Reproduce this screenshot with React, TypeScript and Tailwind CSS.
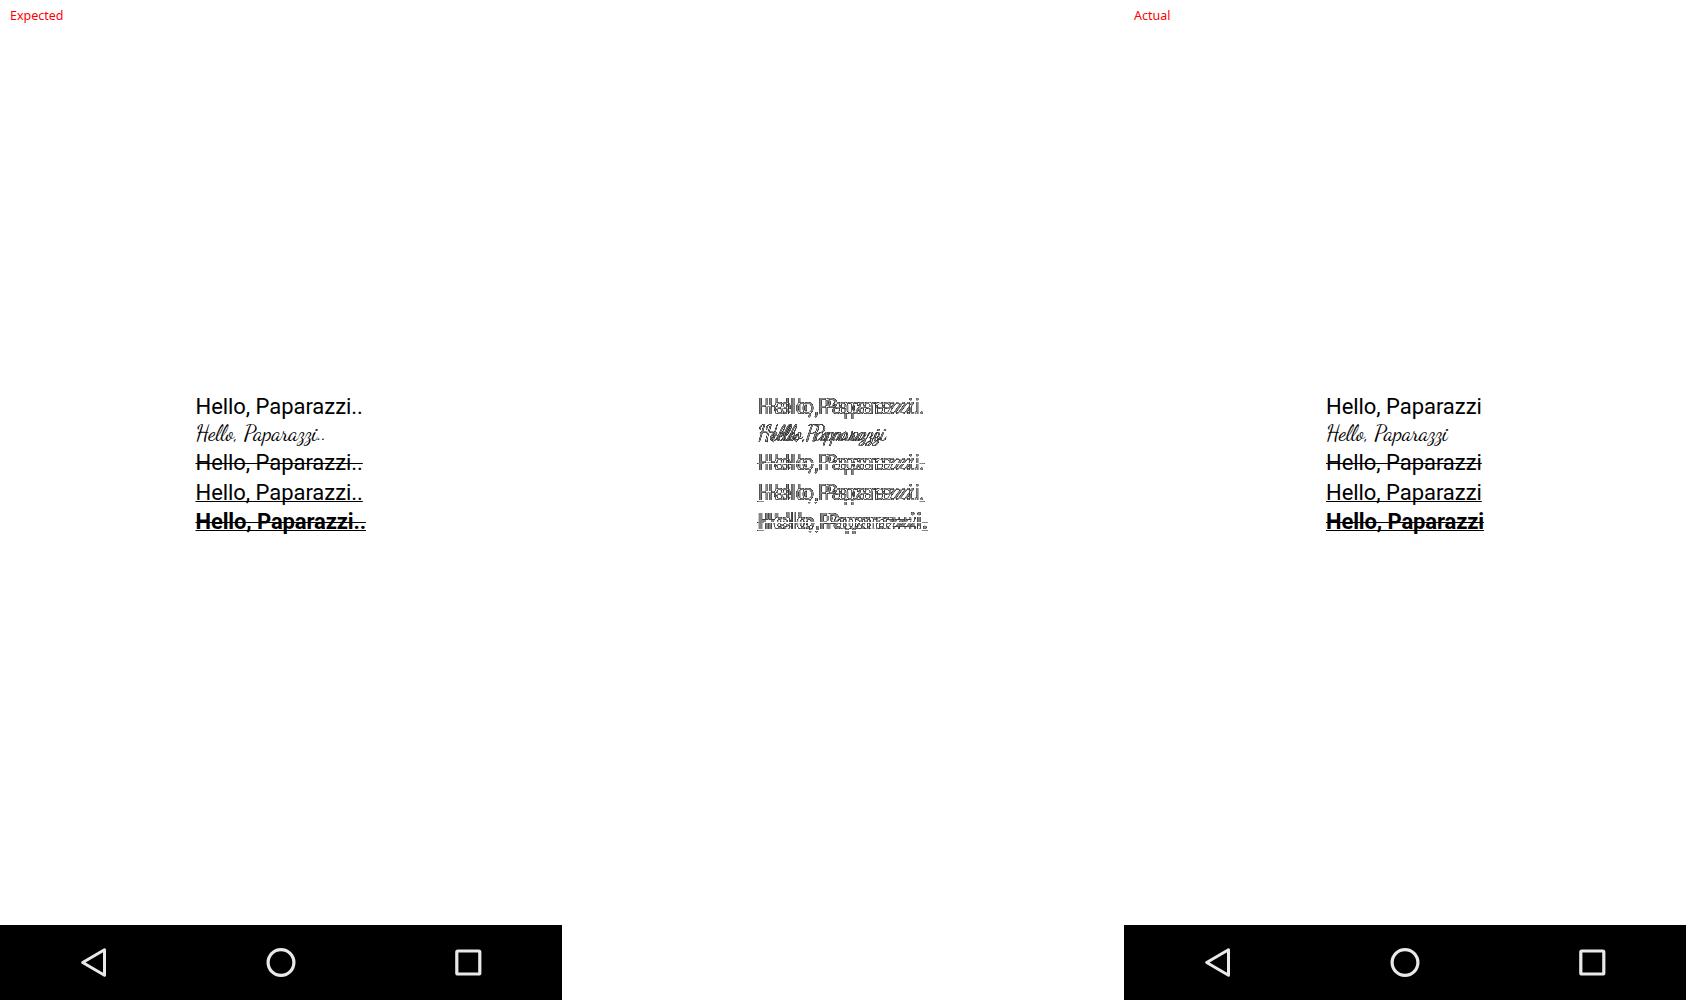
import clsx from "clsx";

const lines = [
  { key: "plain", row: "h-[29px]", style: "tracking-[-0.05px]" },
  { key: "script", row: "h-[27px] pb-[2px]", style: "script" },
  { key: "strike", row: "h-[29px]", style: "tracking-[-0.05px] line-through" },
  { key: "under", row: "h-[30px]", style: "tracking-[-0.05px] underline" },
  { key: "bold", row: "h-[29px]", style: "font-bold tracking-[-0.13px] [text-decoration-line:underline_line-through]" },
];

function Samples({ text, className }: { text: string; className?: string }) {
  return (
    <div className={clsx("flex flex-col items-start pt-[392px] font-['Roboto',sans-serif] text-[22px] whitespace-nowrap", className)}>
      {lines.map((l) => (
        <div key={l.key} className={clsx("flex items-center", l.row)}>
          {l.style === "script" ? (
            <span className="font-['Dancing_Script',cursive] text-[22px] leading-[27px] tracking-[-0.08px]">
              {text}
            </span>
          ) : (
            <span className={clsx("leading-[29px] decoration-[1.2px] underline-offset-[1px] [text-decoration-skip-ink:none]", l.style)}>
              {text}
            </span>
          )}
        </div>
      ))}
    </div>
  );
}

function NavBar() {
  return (
    <div className="grid h-[75px] grid-cols-3 items-center justify-items-center bg-black text-[#e9e9e9]">
      <svg width="30" height="31" viewBox="0 0 30 31" fill="none" stroke="currentColor" strokeWidth="3" strokeLinejoin="round">
        <path d="M25.5 2.7V28.3L3.7 15.5Z" />
      </svg>
      <svg width="30" height="31" viewBox="0 0 30 31" fill="none" stroke="currentColor" strokeWidth="3.2">
        <circle cx="15" cy="15.5" r="12.9" />
      </svg>
      <svg width="30" height="31" viewBox="0 0 30 31" fill="none" stroke="currentColor" strokeWidth="3.2">
        <rect x="3.8" y="4" width="23" height="23" rx="1" />
      </svg>
    </div>
  );
}

function Screen({ label, text, left }: { label: string; text: string; left: string }) {
  return (
    <section className="relative flex h-full flex-col justify-between bg-white">
      <span className="absolute top-[7px] left-[10px] font-['Noto_Sans',sans-serif] text-[12.5px] leading-[18px] text-[#ff0000]">
        {label}
      </span>
      <Samples text={text} className={left} />
      <NavBar />
    </section>
  );
}

function Delta() {
  return (
    <section className="isolate grid bg-black text-white [filter:url(#delta)]">
      <svg className="absolute size-0">
        <filter id="delta" x="0" y="0" width="1" height="1" colorInterpolationFilters="sRGB">
          <feComponentTransfer>
            <feFuncR type="table" tableValues="1 0.65 0.2 0.35 0.53" />
            <feFuncG type="table" tableValues="1 0.65 0.2 0.35 0.53" />
            <feFuncB type="table" tableValues="1 0.65 0.2 0.35 0.53" />
          </feComponentTransfer>
        </filter>
      </svg>
      <Samples text="Hello, Paparazzi.." className="col-start-1 row-start-1 pl-[195.5px]" />
      <Samples text="Hello, Paparazzi" className="col-start-1 row-start-1 pl-[202px] mix-blend-difference" />
    </section>
  );
}

export default function App() {
  return (
    <main className="grid h-[1000px] w-[1686px] grid-cols-3 overflow-hidden bg-white text-black">
      <Screen label="Expected" text="Hello, Paparazzi.." left="pl-[195.5px]" />
      <Delta />
      <Screen label="Actual" text="Hello, Paparazzi" left="pl-[202px]" />
    </main>
  );
}
